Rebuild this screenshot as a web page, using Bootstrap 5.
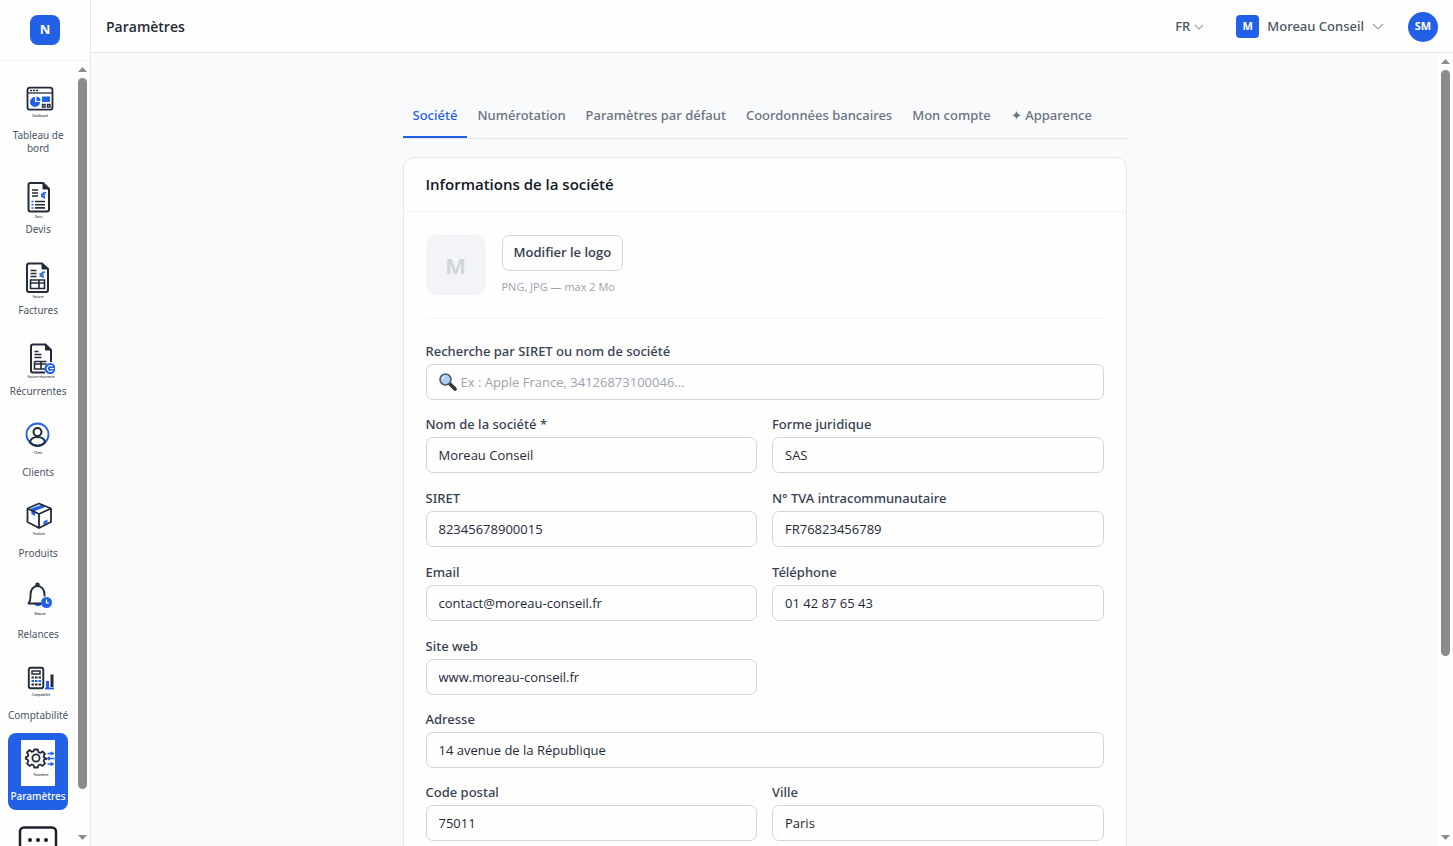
<!DOCTYPE html>
<html lang="fr">
<head>
<meta charset="utf-8">
<meta name="viewport" content="width=device-width, initial-scale=1">
<title>Paramètres</title>
<link href="https://cdn.jsdelivr.net/npm/bootstrap@5.3.0/dist/css/bootstrap.min.css" rel="stylesheet">
<style>
  :root { --brand: #2360e8; --line: #e5e7eb; --ink: #374151; --medium: "Noto Sans", "Open Sans", sans-serif; }
  body { font-family: "Open Sans", "Noto Sans", sans-serif; font-size: 13px; color: var(--ink); background: #f9fafc; }
  .surface { background: #fefefe; }
  .side { width: 91px; border-right: 1px solid var(--line); }
  .side-head { height: 61px; border-bottom: 1px solid #f3f4f6; }
  .brand-tile { width: 30px; height: 30px; border-radius: 8px; background: var(--brand); color: #fff; font-weight: 700; font-size: 13px; }
  .side-nav { padding: 11px 7px 0 8px; gap: 4px; font-family: var(--medium); }
  .side-link { padding: 7px 0; gap: 4px; border-radius: 8px; color: #4b5563; font-size: 10px; line-height: 13px; text-align: center; text-decoration: none; white-space: nowrap; }
  .side-link.active { background: var(--brand); color: #fff; font-weight: 500; }
  .side-link.active svg { background: #fefefe; }
  .side-link span.wrap { white-space: normal; }
  .side-link svg text { font-size: 3px; font-weight: 500; fill: #222b3a; text-anchor: middle; }
  .scroller { width: 15px; padding: 6px 0; gap: 6px; }
  .scroller .thumb { width: 9px; border-radius: 5px; background: #8b8b8b; }
  .top { height: 53px; padding: 1px 15px 0; border-bottom: 1px solid var(--line); }
  .top h1 { font-size: 14px; line-height: 20px; font-weight: 600; color: #1f2937; }
  .plain { border: 0; background: none; padding: 0; color: #4b5563; font-family: var(--medium); font-weight: 500; }
  .org-tile { width: 23px; height: 23px; border-radius: 4px; background: var(--brand); color: #fff; font-size: 11px; font-weight: 700; }
  .avatar { width: 30px; height: 30px; border: 0; border-radius: 50%; background: var(--brand); color: #fff; font-size: 11px; font-weight: 700; }
  .page { max-width: 724px; padding-top: 41px; }
  .tabs { border-bottom: 1px solid var(--line); margin-bottom: 18px; }
  .tabs .nav-link { padding: 12px 10px; line-height: 18px; font-family: var(--medium); font-weight: 500; color: #6b7280; border-bottom: 2px solid transparent; white-space: nowrap; }
  .tabs .nav-link.active { color: var(--brand); border-bottom-color: var(--brand); }
  .panel { border: 1px solid var(--line); border-radius: 11px; }
  .panel-head { padding: 16px 22px; border-bottom: 1px solid #f3f4f6; }
  .panel-head h2 { font-size: 15px; line-height: 21px; font-weight: 600; color: #111827; }
  .panel-body { padding: 23px 22px; }
  .logo-row { gap: 16px; padding-bottom: 23px; margin-bottom: 23px; border-bottom: 1px solid #f3f4f6; }
  .logo-box { width: 60px; height: 60px; border-radius: 11px; background: #f3f4f8; color: #d1d5db; font-size: 22px; font-weight: 700; }
  .btn-logo { height: 36px; padding: 0 11px; border: 1px solid #d1d5db; border-radius: 7px; font-size: 13px; font-weight: 600; color: var(--ink); }
  .hint { font-size: 11px; line-height: 16px; color: #9ca3af; }
  .fields { display: grid; grid-template-columns: 1fr 1fr; gap: 16px 15px; }
  .block { margin-bottom: 15px; }
  .form-label { display: block; font-family: var(--medium); font-weight: 500; line-height: 18px; margin-bottom: 4px; }
  .form-control { height: 36px; padding: 0 12px; border-color: #d1d5db; border-radius: 7px; font-size: 13px; color: #1f2937; background: #fefefe; }
  .form-control::placeholder { color: #9ca3af; }
  .search { padding-left: 34px; }
  .search-icon { left: 13px; top: 9px; }
</style>
</head>
<body class="vh-100 overflow-hidden d-flex">

<aside class="side surface d-flex flex-column flex-shrink-0 h-100">
  <div class="side-head d-flex align-items-center justify-content-center flex-shrink-0"><div class="brand-tile d-flex align-items-center justify-content-center">N</div></div>
  <div class="d-flex flex-grow-1 overflow-hidden">
    <nav class="side-nav d-flex flex-column flex-grow-1" aria-label="Navigation">
      <a class="side-link d-flex flex-column align-items-center" href="#">
        <svg width="34" height="46" viewBox="0 0 34 46" fill="none" stroke="#222b3a" stroke-width="1.800"><rect x="6.500" y="8.700" width="25" height="22" rx="2.500"/><path d="M7 14h25" stroke-width="1.300"/><path d="M9 11.500h8" stroke-dasharray="2 1" stroke-width="1.500"/><path d="M14 18a5 5 0 1 0 5 5h-5z" fill="#2360e8" stroke="none"/><path d="M15.500 17.500a4.500 4.500 0 0 1 4 4.500h-4z" fill="#2360e8" stroke="none"/><path d="M21 17.500h8v5.500h-8z" fill="#2360e8" stroke="none"/><path d="M21.500 25.500h2.500v2.500h-2.500zM26.500 25.500h2.500v2.500h-2.500z" stroke-width="1.400"/><text x="19" y="37.500" stroke="none">Dashboard</text></svg>
        <span class="wrap">Tableau de bord</span></a>
      <a class="side-link d-flex flex-column align-items-center" href="#">
        <svg width="34" height="46" viewBox="0 0 34 46" fill="none" stroke="#222b3a" stroke-width="2"><path d="M22 10H9.500a2 2 0 0 0-2 2v24.500a2 2 0 0 0 2 2H26a2 2 0 0 0 2-2V16z"/><path d="M22 10v6h6z" fill="#222b3a" stroke-width="1"/><path d="M11 17h6M11 20h6M11 23h6M14 28.500h10M14 31.700h10M14 34.900h10" stroke-width="1.600"/><path d="M10.500 28.500h2M10.500 31.700h2M10.500 34.900h2M25 20c-3.500-2-5.500 4.500-1 5M20 21.500h4M20 23.500h4" stroke="#2360e8" stroke-width="1.500"/><text x="17.500" y="44.500" stroke="none">Devis</text></svg>
        <span>Devis</span></a>
      <a class="side-link d-flex flex-column align-items-center" href="#">
        <svg width="34" height="46" viewBox="0 0 34 46" fill="none" stroke="#222b3a" stroke-width="2"><path d="M21 9.500H8a2 2 0 0 0-2 2V36a2 2 0 0 0 2 2h17a2 2 0 0 0 2-2V15z"/><path d="M21 9.500V15h6z" fill="#222b3a" stroke-width="1"/><path d="M9.500 16.500h6M9.500 19.500h6M9.500 22.500h6M9.500 26h14v8.500h-14zM9.500 29h14M18 26v8" stroke-width="1.600"/><path d="M24 18.500c-3.500-2-5.500 4.500-1 5M18.500 20h4M18.500 22h4" stroke="#2360e8" stroke-width="1.500"/><text x="17" y="43.500" stroke="none">Facture</text></svg>
        <span>Factures</span></a>
      <a class="side-link d-flex flex-column align-items-center" href="#">
        <svg width="34" height="46" viewBox="0 0 34 46" fill="none" stroke="#222b3a" stroke-width="2"><path d="M30 27V15l-5.500-5.500H12a2 2 0 0 0-2 2V35.500a2 2 0 0 0 2 2h12"/><path d="M24.500 9.500V15H30z" fill="#222b3a" stroke-width="1"/><path d="M13.500 16.500h4M13.500 19.500h7M13.500 22.500h7M13.500 26.500h12M13.500 26.500v7.500h11M13.500 29h12M20 27v7" stroke-width="1.600"/><circle cx="29" cy="33.500" r="5.500" fill="#2360e8" stroke="none"/><path d="M31.500 31.500a3 3 0 1 0 0 4M29 33.500h4" stroke="#fff" stroke-width="1.200"/><text x="20" y="42.500" stroke="none">Facture récurrente</text></svg>
        <span>Récurrentes</span></a>
      <a class="side-link d-flex flex-column align-items-center" href="#">
        <svg width="34" height="46" viewBox="0 0 34 46" fill="none" stroke="#222b3a" stroke-width="2"><circle cx="16.500" cy="18.500" r="11" stroke="#2360e8" stroke-width="1.800"/><circle cx="16.500" cy="16" r="4"/><path d="M9 26.500c.5-7.500 14.500-7.500 15 0M9 26.500c4 4.500 11 4.500 15 0"/><text x="17" y="37.500" stroke="none">Client</text></svg>
        <span>Clients</span></a>
      <a class="side-link d-flex flex-column align-items-center" href="#">
        <svg width="34" height="46" viewBox="0 0 34 46" fill="none" stroke="#222b3a" stroke-width="1.800" stroke-linejoin="round"><path d="M10 11.500L21.500 7.500l4 2L14 14v5l-3.500-2z" fill="#2360e8" stroke="none"/><path d="M18 6.500l12 5V25l-12 6-11.500-6V11.500zM6.500 11.500L18 17l12-5.500M18 17v14"/><path d="M22.500 24.500l4-2v3.500l-4 2z" fill="#2360e8" stroke="none"/><text x="18" y="37.500" stroke="none">Produits</text></svg>
        <span>Produits</span></a>
      <a class="side-link d-flex flex-column align-items-center" href="#">
        <svg width="34" height="46" viewBox="0 0 34 46" fill="none" stroke="#222b3a" stroke-width="1.900" stroke-linejoin="round"><path d="M14 26a3.500 2.500 0 0 0 6 0z" fill="#2360e8" stroke="#2360e8"/><path d="M20 25.500H7.500c2.500-3 2-5 2-9 0-5 3-8.500 7-8.500s7 3.500 7 8.500v2"/><circle cx="16.500" cy="6.800" r="1.300"/><circle cx="25.500" cy="24.500" r="5.500" fill="#2360e8" stroke="none"/><path d="M25.500 21.500v3.500h2.500" stroke="#fff" stroke-width="1.200"/><text x="19" y="36.500" stroke="none">Relance</text></svg>
        <span>Relances</span></a>
      <a class="side-link d-flex flex-column align-items-center" href="#">
        <svg width="34" height="46" viewBox="0 0 34 46" fill="none" stroke="#222b3a" stroke-width="1.900"><rect x="7.800" y="8.800" width="14.500" height="20.500" rx="2"/><path d="M11 12h8v3h-8z" stroke-width="1.500"/><path d="M10.500 18.500h9.500M10.500 25.500h9.500" stroke-width="2.200" stroke-dasharray="2.500 1"/><path d="M10.500 22h9.500" stroke="#2360e8" stroke-width="2.200" stroke-dasharray="2.500 1"/><path d="M26.500 22v7.500" stroke="#2360e8" stroke-width="3"/><path d="M24 29.500h9" stroke="#2360e8"/><path d="M31 15.500V28" stroke-width="3"/><text x="20" y="36.500" stroke="none">Comptabilité</text></svg>
        <span>Comptabilité</span></a>
      <a class="side-link active d-flex flex-column align-items-center" href="#" aria-current="page">
        <svg width="34" height="46" viewBox="0 0 34 46" fill="none" stroke="#222b3a" stroke-width="1.800"><path d="M13.200 9.500h3.600l.6 2.600 1.800.8 2.300-1.400 2.500 2.500-1.400 2.300.7 1.700 2 .4v.6l-2 .4-.7 1.700 1.400 2.300-2.500 2.500-2.300-1.400-1.800.8-.6 2.200h-3.600l-.6-2.200-1.800-.8-2.300 1.400L6 23.400l1.400-2.300-.7-1.300-1.900-.9v-1.700l1.900-.6.7-1.700L6 12.500 8.500 10l2.300 1.800 1.800-.7z" stroke-linejoin="round"/><circle cx="15" cy="18" r="3.600"/><path d="M26.500 13.500H33M26 18.500h7.500M26.500 24H33" stroke="#2360e8" stroke-width="1.400"/><path d="M30.500 11.800v3.500M28 16.800v3.500M30.500 22.300v3.500" stroke="#2360e8" stroke-width="2"/><text x="20" y="36" stroke="none">Paramètre</text></svg>
        <span>Paramètres</span></a>
      <a class="side-link d-flex flex-column align-items-center" href="#" aria-label="Plus">
        <svg width="40" height="46" viewBox="0 0 40 46" fill="none" stroke="#1b202a" stroke-width="2.500"><rect x="2" y="6.500" width="36" height="30" rx="4"/><g fill="#1b202a" stroke="none"><circle cx="12" cy="19" r="2"/><circle cx="20" cy="19" r="2"/><circle cx="28" cy="19" r="2"/></g></svg>
      </a>
    </nav>
    <div class="scroller d-flex flex-column align-items-center flex-shrink-0" aria-hidden="true">
      <svg width="9" height="5" viewBox="0 0 9 5" fill="#8b8b8b"><path d="M4.500 0L9 5H0z"/></svg>
      <div class="thumb" style="height:92%"></div>
      <svg class="mt-auto" width="9" height="5" viewBox="0 0 9 5" fill="#8b8b8b"><path d="M4.500 5L9 0H0z"/></svg>
    </div>
  </div>
</aside>

<div class="d-flex flex-column flex-grow-1 h-100 overflow-hidden">
  <header class="top surface d-flex align-items-center flex-shrink-0">
    <h1 class="m-0 me-auto">Paramètres</h1>
    <button class="plain d-flex align-items-center gap-1" type="button">FR
      <svg width="10" height="6" viewBox="0 0 10 6" fill="none" stroke="#9ca3af" stroke-width="1.200"><path d="M1 1l4 4 4-4"/></svg></button>
    <button class="plain d-flex align-items-center ms-4" type="button">
      <span class="org-tile d-flex align-items-center justify-content-center ms-2 me-2">M</span>Moreau Conseil
      <svg class="ms-2" width="12" height="7" viewBox="0 0 12 7" fill="none" stroke="#9ca3af" stroke-width="1.200"><path d="M1 1l5 5 5-5"/></svg></button>
    <button class="avatar ms-4 p-0" type="button">SM</button>
  </header>

  <div class="d-flex flex-grow-1 overflow-hidden">
    <main class="flex-grow-1 overflow-hidden">
      <div class="page mx-auto">
        <ul class="nav tabs flex-nowrap">
          <li class="nav-item"><a class="nav-link active" href="#">Société</a></li>
          <li class="nav-item"><a class="nav-link" href="#">Numérotation</a></li>
          <li class="nav-item"><a class="nav-link" href="#">Paramètres par défaut</a></li>
          <li class="nav-item"><a class="nav-link" href="#">Coordonnées bancaires</a></li>
          <li class="nav-item"><a class="nav-link" href="#">Mon compte</a></li>
          <li class="nav-item"><a class="nav-link" href="#">✦ Apparence</a></li>
        </ul>
        <section class="panel surface">
          <div class="panel-head"><h2 class="m-0">Informations de la société</h2></div>
          <form class="panel-body">
            <div class="logo-row d-flex align-items-center">
              <div class="logo-box d-flex align-items-center justify-content-center">M</div>
              <div class="d-flex flex-column align-items-start gap-2">
                <button class="btn btn-logo" type="button">Modifier le logo</button>
                <div class="hint">PNG, JPG — max 2 Mo</div>
              </div>
            </div>
            <div class="block">
              <label class="form-label" for="q">Recherche par SIRET ou nom de société</label>
              <div class="position-relative">
                <svg class="search-icon position-absolute" width="18" height="18" viewBox="0 0 18 18"><path d="M10.500 10.500l5.500 5.500" stroke="#30343b" stroke-width="3.600" stroke-linecap="round"/><circle cx="6.500" cy="6.500" r="5.500" fill="#a9cdf5" stroke="#4b5563" stroke-width="1.500"/><path d="M3.500 6a3 3 0 0 1 3-2.500" stroke="#e5f1fd" stroke-width="1.200" fill="none"/></svg>
                <input class="form-control search" id="q" type="search" placeholder="Ex : Apple France, 34126873100046...">
              </div>
            </div>
            <div class="fields block">
              <div><label class="form-label" for="nom">Nom de la société *</label><input class="form-control" id="nom" value="Moreau Conseil"></div>
              <div><label class="form-label" for="forme">Forme juridique</label><input class="form-control" id="forme" value="SAS"></div>
              <div><label class="form-label" for="siret">SIRET</label><input class="form-control" id="siret" value="82345678900015"></div>
              <div><label class="form-label" for="tva">N° TVA intracommunautaire</label><input class="form-control" id="tva" value="FR76823456789"></div>
              <div><label class="form-label" for="email">Email</label><input class="form-control" id="email" type="email" value="contact@moreau-conseil.fr"></div>
              <div><label class="form-label" for="tel">Téléphone</label><input class="form-control" id="tel" type="tel" value="01 42 87 65 43"></div>
              <div><label class="form-label" for="web">Site web</label><input class="form-control" id="web" value="www.moreau-conseil.fr"></div>
            </div>
            <div class="block"><label class="form-label" for="adr">Adresse</label><input class="form-control" id="adr" value="14 avenue de la République"></div>
            <div class="fields">
              <div><label class="form-label" for="cp">Code postal</label><input class="form-control" id="cp" value="75011"></div>
              <div><label class="form-label" for="ville">Ville</label><input class="form-control" id="ville" value="Paris"></div>
            </div>
          </form>
        </section>
      </div>
    </main>
    <div class="scroller surface d-flex flex-column align-items-center flex-shrink-0" aria-hidden="true">
      <svg width="9" height="5" viewBox="0 0 9 5" fill="#8b8b8b"><path d="M4.500 0L9 5H0z"/></svg>
      <div class="thumb" style="height:75%"></div>
      <svg class="mt-auto" width="9" height="5" viewBox="0 0 9 5" fill="#8b8b8b"><path d="M4.500 5L9 0H0z"/></svg>
    </div>
  </div>
</div>
<script src="https://cdn.jsdelivr.net/npm/bootstrap@5.3.0/dist/js/bootstrap.bundle.min.js"></script>
</body>
</html>
